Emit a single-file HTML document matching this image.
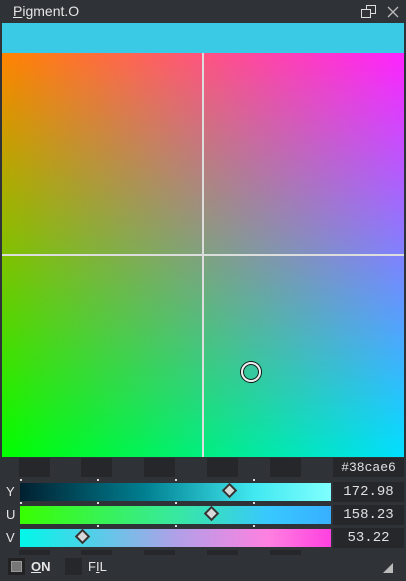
<!DOCTYPE html>
<html><head><style>
*{margin:0;padding:0;box-sizing:border-box}
body{width:406px;height:581px;background:#2f3237;font-family:"Liberation Sans",sans-serif;position:relative;overflow:hidden}
.a{position:absolute}
.t{color:#e6e6e6;font-size:14px}
.mono{font-family:"Liberation Mono",monospace;color:#e0e0e0;font-size:13px;text-align:center;line-height:19px}
.sw{position:absolute;background:#25272b}
.d{position:absolute;width:11px;height:11px;background:#d8d8d8;border:2px solid #333;transform:rotate(45deg)}
.tick{position:absolute;width:2px;height:2px;background:#ddd}
</style></head><body>
<div class="a t" style="left:13px;top:3px"><u>P</u>igment.O</div>
<svg class="a" style="left:361px;top:5px" width="16" height="14"><rect x="5.5" y="0.5" width="9" height="8" fill="none" stroke="#ddd"/><rect x="0.5" y="4.5" width="9" height="8" fill="#31353a" stroke="#ddd"/></svg>
<svg class="a" style="left:387px;top:6px" width="12" height="12"><path d="M1 1L11 11M11 1L1 11" stroke="#bbb" stroke-width="1.3"/></svg>
<div class="a" style="left:2px;top:23px;width:402px;height:30px;background:#3acae6"></div>
<div class="a" style="left:2px;top:53px;width:402px;height:404px;background:linear-gradient(to right,#00ff00,#00e0ff)"></div>
<div class="a" style="left:2px;top:53px;width:402px;height:404px;background:linear-gradient(to right,#ff8400,#ff22ff);-webkit-mask-image:linear-gradient(to bottom,#000,transparent);mask-image:linear-gradient(to bottom,#000,transparent)"></div>
<div class="a" style="left:2px;top:254px;width:402px;height:2px;background:#ddd"></div>
<div class="a" style="left:202px;top:53px;width:2px;height:404px;background:#ddd"></div>
<div class="a" style="left:241px;top:362px;width:20px;height:20px;border-radius:50%;border:2px solid #eee;box-shadow:0 0 0 1px #111,inset 0 0 0 1px #111"></div>
<div class="sw" style="left:19px;top:458px;width:31px;height:19px"></div>
<div class="sw" style="left:81px;top:458px;width:31px;height:19px"></div>
<div class="sw" style="left:144px;top:458px;width:31px;height:19px"></div>
<div class="sw" style="left:207px;top:458px;width:31px;height:19px"></div>
<div class="sw" style="left:270px;top:458px;width:31px;height:19px"></div>
<div class="sw mono" style="left:333px;top:458px;width:71px;height:19px">#38cae6</div>
<div class="a t" style="left:6px;top:484px;font-size:13px">Y</div>
<div class="a t" style="left:6px;top:507px;font-size:13px">U</div>
<div class="a t" style="left:6px;top:530px;font-size:13px">V</div>
<div class="a" style="left:20px;top:483px;width:311px;height:18px;background:linear-gradient(to right,#002030,#007f90 40%,#40e8f0 75%,#80ffff)"></div>
<div class="a" style="left:20px;top:506px;width:311px;height:18px;background:linear-gradient(to right,#38ff00,#38e8a0 50%,#38c8ff 80%,#38b0ff)"></div>
<div class="a" style="left:20px;top:529px;width:311px;height:18px;background:linear-gradient(to right,#00f8e8,#b0a0e8 50%,#ff80e0 80%,#ff40e0)"></div>
<div class="d" style="left:224px;top:485px"></div>
<div class="d" style="left:206px;top:508px"></div>
<div class="d" style="left:77px;top:531px"></div>
<div class="tick" style="left:20px;top:479px"></div><div class="tick" style="left:97px;top:479px"></div><div class="tick" style="left:175px;top:479px"></div><div class="tick" style="left:253px;top:479px"></div>
<div class="tick" style="left:20px;top:502px"></div><div class="tick" style="left:97px;top:502px"></div><div class="tick" style="left:175px;top:502px"></div><div class="tick" style="left:253px;top:502px"></div>
<div class="tick" style="left:97px;top:525px"></div><div class="tick" style="left:175px;top:525px"></div><div class="tick" style="left:253px;top:525px"></div>
<div class="sw mono" style="left:333px;top:482px;width:71px;height:20px;font-size:14px;line-height:20px">172.98</div>
<div class="sw mono" style="left:333px;top:505px;width:71px;height:20px;font-size:14px;line-height:20px">158.23</div>
<div class="sw mono" style="left:333px;top:528px;width:71px;height:20px;font-size:14px;line-height:20px">53.22</div>
<div class="sw" style="left:19px;top:550px;width:31px;height:5px"></div>
<div class="sw" style="left:81px;top:550px;width:31px;height:5px"></div>
<div class="sw" style="left:144px;top:550px;width:31px;height:5px"></div>
<div class="sw" style="left:207px;top:550px;width:31px;height:5px"></div>
<div class="sw" style="left:270px;top:550px;width:31px;height:5px"></div>
<div class="a" style="left:8px;top:558px;width:17px;height:17px;background:#222;padding:3px"><div style="width:11px;height:11px;background:#777;border:1px solid #999"></div></div>
<div class="a t" style="left:31px;top:559px;font-size:13px;font-weight:bold"><u>O</u>N</div>
<div class="a" style="left:65px;top:558px;width:17px;height:17px;background:#25272b"></div>
<div class="a t" style="left:88px;top:559px;font-size:13px">F<u>I</u>L</div>
<svg class="a" style="left:383px;top:563px" width="10" height="10"><path d="M10 0L10 10L0 10Z" fill="#bbb"/></svg>
</body></html>
